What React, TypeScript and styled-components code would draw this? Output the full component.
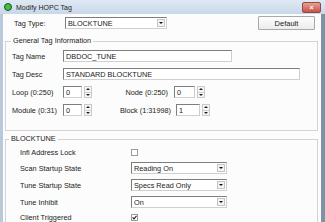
import React from 'react'
import styled, { createGlobalStyle } from 'styled-components'

const Global = createGlobalStyle`
  html, body { margin: 0; padding: 0; background: #fff; }
  body { font-family: "Liberation Sans", Arial, sans-serif; }
`

const S = {
  Window: styled.div`
    width: 325px;
    height: 222px;
    overflow: hidden;
    display: flex;
    flex-direction: column;
    background: #a9bccf;
  `,
  TitleBar: styled.div`
    height: 14px;
    flex: none;
    display: flex;
    align-items: center;
    padding: 0 4px 0 4px;
    background: linear-gradient(#dfe9f4, #c8d8e9);
  `,
  TitleIcon: styled.div`
    width: 6px;
    height: 6px;
    border-radius: 50%;
    background: #3fc23a;
    border: 1px solid #2a4a2a;
    margin-right: 4px;
  `,
  Title: styled.div`
    font-size: 7px;
    color: #1c1c1c;
    flex: 1;
  `,
  Close: styled.div`
    width: 17px;
    height: 9px;
    border-radius: 2px;
    border: 1px solid #8d4a48;
    background: linear-gradient(#e8a08f, #c9524a);
    display: flex;
    align-items: center;
    justify-content: center;
    color: #fff;
    font-size: 7px;
    font-weight: bold;
    line-height: 1;
  `,
  Frame: styled.div`
    flex: 1;
    display: flex;
    border-left: 3px solid #b8c9da;
    border-right: 4px solid #7d92a6;
  `,
  Body: styled.div`
    flex: 1;
    background: #fcfcfc;
    padding: 2px 3px 0 2px;
    font-size: 7.3px;
    color: #222;
  `,
  TopRow: styled.div`
    display: flex;
    align-items: center;
    height: 14px;
    padding-left: 9px;
    padding-right: 3px;
  `,
  Label: styled.div<{ $w: number; $right?: boolean; $pad?: number }>`
    width: ${({ $w }) => $w}px;
    flex: none;
    text-align: ${({ $right }) => ($right ? 'right' : 'left')};
    padding-right: ${({ $pad }) => $pad ?? 0}px;
    box-sizing: border-box;
    white-space: nowrap;
  `,
  Combo: styled.div<{ $w: number }>`
    width: ${({ $w }) => $w}px;
    height: 12px;
    box-sizing: border-box;
    display: flex;
    align-items: center;
    background: #fff;
    border: 1px solid;
    border-color: #7d7d7d #cfcfcf #cfcfcf #7d7d7d;
    padding-left: 2px;
  `,
  ComboText: styled.div`
    flex: 1;
  `,
  ComboArrow: styled.div`
    width: 8px;
    height: 8px;
    margin-right: 1px;
    box-sizing: border-box;
    border: 1px solid #c4c4c4;
    background: #f4f4f4;
    display: flex;
    align-items: center;
    justify-content: center;
    &::after {
      content: '';
      border-left: 2px solid transparent;
      border-right: 2px solid transparent;
      border-top: 2px solid #111;
    }
  `,
  Button: styled.div`
    margin-left: auto;
    width: 57px;
    height: 14px;
    box-sizing: border-box;
    border: 1px solid #a9a9a9;
    border-radius: 1px;
    background: linear-gradient(#fdfdfd, #ececec);
    display: flex;
    align-items: center;
    justify-content: center;
    font-size: 7.5px;
  `,
  Group: styled.fieldset<{ $top: number; $grow?: boolean }>`
    margin: ${({ $top }) => $top}px 0 0 0;
    padding: 0;
    border: 1px solid #d3d3d3;
    ${({ $grow }) => ($grow ? 'border-bottom: none;' : '')}
    min-width: 0;
  `,
  Legend: styled.legend<{ $off: number }>`
    margin-left: ${({ $off }) => $off}px;
    padding: 0 2px;
    line-height: 10px;
    font-size: 7.3px;
  `,
  Rows: styled.div<{ $gap: number; $padTop: number; $padBottom: number; $padLeft: number }>`
    display: flex;
    flex-direction: column;
    gap: ${({ $gap }) => $gap}px;
    padding: ${({ $padTop }) => $padTop}px 0 ${({ $padBottom }) => $padBottom}px ${({ $padLeft }) => $padLeft}px;
  `,
  Row: styled.div<{ $h?: number }>`
    display: flex;
    align-items: center;
    height: ${({ $h }) => $h ?? 12}px;
  `,
  Input: styled.div<{ $w: number }>`
    width: ${({ $w }) => $w}px;
    height: 12px;
    box-sizing: border-box;
    background: #fff;
    border: 1px solid;
    border-color: #7d7d7d #cfcfcf #cfcfcf #7d7d7d;
    padding-left: 2px;
    display: flex;
    align-items: center;
    white-space: nowrap;
    overflow: hidden;
  `,
  Spinner: styled.div`
    width: 8px;
    height: 12px;
    margin-left: 2px;
    display: flex;
    flex-direction: column;
    border: 1px solid #cacaca;
    box-sizing: border-box;
    background: #f6f6f6;
  `,
  SpinHalf: styled.div<{ $up?: boolean }>`
    flex: 1;
    display: flex;
    align-items: center;
    justify-content: center;
    ${({ $up }) => ($up ? 'border-bottom: 1px solid #d0d0d0;' : '')}
    &::after {
      content: '';
      border-left: 2px solid transparent;
      border-right: 2px solid transparent;
      ${({ $up }) => ($up ? 'border-bottom: 2px solid #222;' : 'border-top: 2px solid #222;')}
    }
  `,
  Check: styled.div`
    width: 7px;
    height: 7px;
    box-sizing: border-box;
    border: 1px solid #9c9c9c;
    background: #fff;
    display: flex;
    align-items: center;
    justify-content: center;
  `,
}

const Spin = ({ value, w }: { value: string; w: number }) => (
  <>
    <S.Input $w={w}>{value}</S.Input>
    <S.Spinner>
      <S.SpinHalf $up />
      <S.SpinHalf />
    </S.Spinner>
  </>
)

const Combo = ({ value, w }: { value: string; w: number }) => (
  <S.Combo $w={w}>
    <S.ComboText>{value}</S.ComboText>
    <S.ComboArrow />
  </S.Combo>
)

const Checkbox = ({ checked }: { checked?: boolean }) => (
  <S.Check>
    {checked && (
      <svg width="5" height="5" viewBox="0 0 5 5">
        <path d="M0.6 2.4 L2 3.9 L4.5 0.9" stroke="#222" strokeWidth="1.1" fill="none" />
      </svg>
    )}
  </S.Check>
)

export default function App() {
  return (
    <S.Window>
      <Global />
      <S.TitleBar>
        <S.TitleIcon />
        <S.Title>Modify HOPC Tag</S.Title>
        <S.Close>×</S.Close>
      </S.TitleBar>
      <S.Frame>
        <S.Body>
          <S.TopRow>
            <S.Label $w={51}>Tag Type:</S.Label>
            <Combo value="BLOCKTUNE" w={102} />
            <S.Button>Default</S.Button>
          </S.TopRow>

          <S.Group $top={6}>
            <S.Legend $off={5}>General Tag Information</S.Legend>
            <S.Rows $gap={6} $padTop={4} $padBottom={14} $padLeft={6}>
              <S.Row>
                <S.Label $w={51}>Tag Name</S.Label>
                <S.Input $w={169}>DBDOC_TUNE</S.Input>
              </S.Row>
              <S.Row>
                <S.Label $w={51}>Tag Desc</S.Label>
                <S.Input $w={237}>STANDARD BLOCKTUNE</S.Input>
              </S.Row>
              <S.Row>
                <S.Label $w={51}>Loop (0:250)</S.Label>
                <Spin value="0" w={19} />
                <S.Label $w={82} $right $pad={6}>Node (0:250)</S.Label>
                <Spin value="0" w={21} />
              </S.Row>
              <S.Row>
                <S.Label $w={51}>Module (0:31)</S.Label>
                <Spin value="0" w={19} />
                <S.Label $w={84} $right $pad={5}>Block (1:31998)</S.Label>
                <Spin value="1" w={24} />
              </S.Row>
            </S.Rows>
          </S.Group>

          <S.Group $top={3} $grow>
            <S.Legend $off={3}>BLOCKTUNE</S.Legend>
            <S.Rows $gap={5} $padTop={4} $padBottom={4} $padLeft={14}>
              <S.Row $h={9}>
                <S.Label $w={111}>Infi Address Lock</S.Label>
                <Checkbox />
              </S.Row>
              <S.Row>
                <S.Label $w={111}>Scan Startup State</S.Label>
                <Combo value="Reading On" w={96} />
              </S.Row>
              <S.Row>
                <S.Label $w={111}>Tune Startup State</S.Label>
                <Combo value="Specs Read Only" w={96} />
              </S.Row>
              <S.Row>
                <S.Label $w={111}>Tune Inhibit</S.Label>
                <Combo value="On" w={96} />
              </S.Row>
              <S.Row $h={9}>
                <S.Label $w={111}>Client Triggered</S.Label>
                <Checkbox checked />
              </S.Row>
            </S.Rows>
          </S.Group>
        </S.Body>
      </S.Frame>
    </S.Window>
  )
}
